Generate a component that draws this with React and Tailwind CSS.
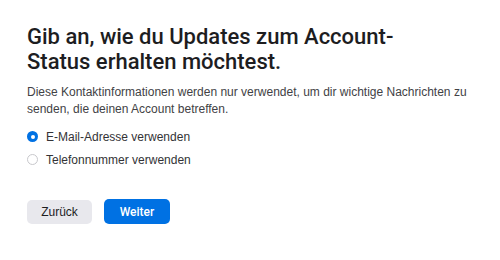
export default function App() {
  return (
    <div
      className="w-[500px] h-[260px] bg-white text-[#1d1d1f] px-[27px] pt-[24px]"
      style={{ fontFamily: "'Liberation Sans', Arial, sans-serif" }}
    >
      <h1
        className="text-[22px] leading-[25px] whitespace-nowrap"
        style={{ fontFamily: "Roboto, 'Liberation Sans', sans-serif", fontWeight: 500 }}
      >
        Gib an, wie du Updates zum Account-
        <br />
        Status erhalten möchtest.
      </h1>
      <p className="mt-[10px] text-[12px] leading-[17px] text-[#424245] whitespace-nowrap">
        Diese Kontaktinformationen werden nur verwendet, um dir wichtige Nachrichten zu
        <br />
        senden, die deinen Account betreffen.
      </p>

      <div className="mt-[10px] flex flex-col gap-[6px]">
        <label className="flex items-center gap-[8px] h-[17px] text-[12px] text-[#333336]">
          <span className="w-[11px] h-[11px] rounded-full bg-[#0071e3] flex items-center justify-center">
            <span className="w-[4px] h-[4px] rounded-full bg-white" />
          </span>
          E-Mail-Adresse verwenden
        </label>
        <label className="flex items-center gap-[8px] h-[17px] text-[12px] text-[#333336]">
          <span className="w-[11px] h-[11px] rounded-full border border-[#c8c8cc] bg-white" />
          Telefonnummer verwenden
        </label>
      </div>

      <div className="mt-[32px] flex gap-[12px]">
        <button className="w-[65px] h-[24px] rounded-[5px] bg-[#e8e8ed] text-[12px] text-[#1d1d1f]">
          Zurück
        </button>
        <button
          className="w-[66px] h-[25px] -mt-px rounded-[5px] bg-[#0071e3] text-[12px] text-white"
          style={{ fontFamily: "Roboto, 'Liberation Sans', sans-serif", fontWeight: 500 }}
        >
          Weiter
        </button>
      </div>
    </div>
  );
}
